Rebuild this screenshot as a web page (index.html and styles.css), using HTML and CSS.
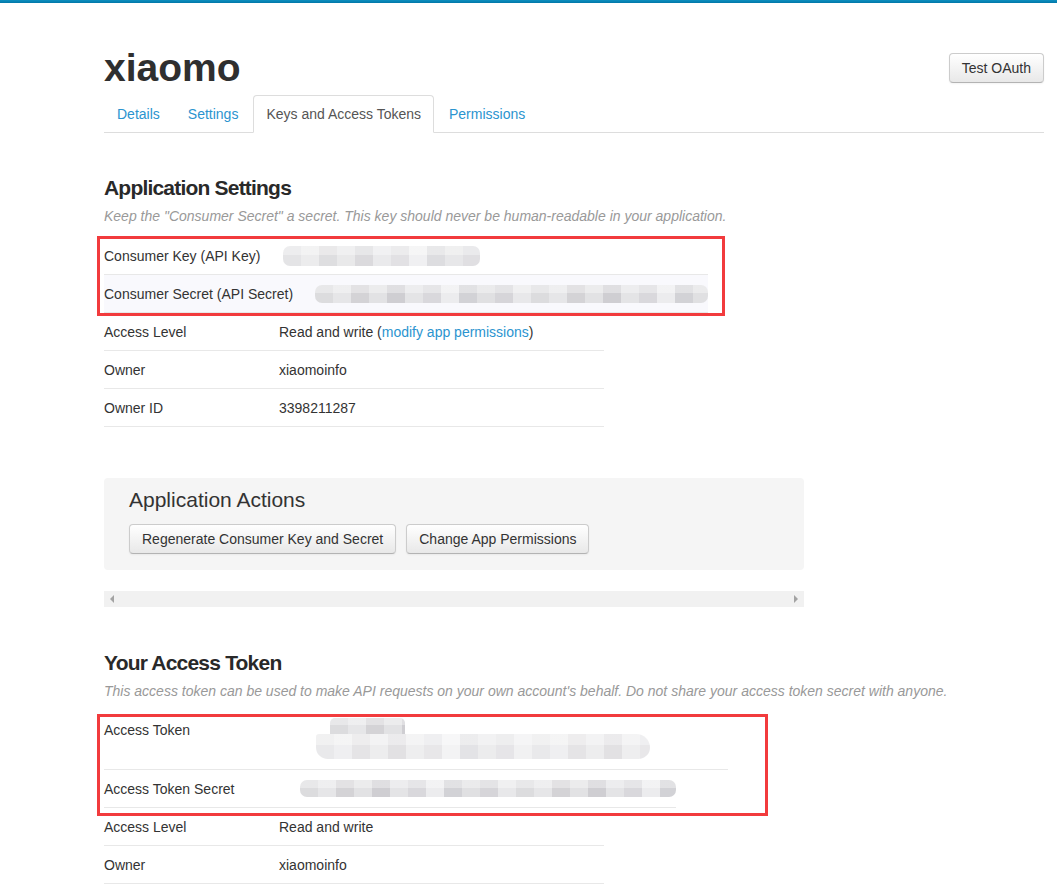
FILE: index.html
```html
<!DOCTYPE html>
<html lang="en">
<head>
  <meta charset="UTF-8">
  <title>xiaomo - Keys and Access Tokens</title>
  <link rel="stylesheet" href="styles.css">
</head>
<body>
  <div class="topbar"></div>

  <div class="container">
    <div class="app-header">
      <h1>xiaomo</h1>
      <button class="btn">Test OAuth</button>
    </div>

    <ul class="nav-tabs">
      <li><a href="#">Details</a></li>
      <li><a href="#">Settings</a></li>
      <li class="active"><a href="#">Keys and Access Tokens</a></li>
      <li><a href="#">Permissions</a></li>
    </ul>

    <!-- Application Settings -->
    <section class="app-section">
      <h2>Application Settings</h2>
      <p class="note">Keep the "Consumer Secret" a secret. This key should never be human-readable in your application.</p>

      <div class="marked marked-keys">
        <div class="row row-wide">
          <span class="label">Consumer Key (API Key)</span>
          <span class="value"><span class="blur blur-key"></span></span>
        </div>
        <div class="row row-wide row-tint">
          <span class="label">Consumer Secret (API Secret)</span>
          <span class="value"><span class="blur blur-secret"></span></span>
        </div>
      </div>
      <div class="row">
        <span class="label">Access Level</span>
        <span class="value">Read and write (<a href="#">modify app permissions</a>)</span>
      </div>
      <div class="row">
        <span class="label">Owner</span>
        <span class="value">xiaomoinfo</span>
      </div>
      <div class="row">
        <span class="label">Owner ID</span>
        <span class="value">3398211287</span>
      </div>
    </section>

    <div class="actions">
      <h3>Application Actions</h3>
      <div class="actions-buttons">
        <button class="btn">Regenerate Consumer Key and Secret</button>
        <button class="btn">Change App Permissions</button>
      </div>
    </div>

    <div class="scrollbar">
      <span class="arrow arrow-left"></span>
      <span class="arrow arrow-right"></span>
    </div>

    <!-- Access Token -->
    <section class="app-section token-section">
      <h2>Your Access Token</h2>
      <p class="note">This access token can be used to make API requests on your own account's behalf. Do not share your access token secret with anyone.</p>

      <div class="marked marked-token">
        <div class="row row-token">
          <span class="label">Access Token</span>
          <span class="value">
            <span class="blur blur-token-a"></span>
            <span class="blur blur-token-b"></span>
          </span>
        </div>
        <div class="row row-token-secret">
          <span class="label">Access Token Secret</span>
          <span class="value"><span class="blur blur-token-secret"></span></span>
        </div>
      </div>
      <div class="row">
        <span class="label">Access Level</span>
        <span class="value">Read and write</span>
      </div>
      <div class="row">
        <span class="label">Owner</span>
        <span class="value">xiaomoinfo</span>
      </div>
    </section>
  </div>
</body>
</html>
```

FILE: styles.css
```css
/* General */
body {
  margin: 0;
  font-family: "Liberation Sans", Arial, sans-serif;
  font-size: 14px;
  line-height: 20px;
  color: #333;
  background-color: #fff;
}

a {
  color: #2b94cf;
  text-decoration: none;
}

.topbar {
  height: 3px;
  background: linear-gradient(#0d8fc0, #0077a8);
}

.container {
  width: 940px;
  margin-left: 104px;
}

/* Header */
.app-header {
  height: 55px;
  padding-top: 37px;
  display: flex;
  justify-content: space-between;
  align-items: center;
}

.app-header h1 {
  margin: 0;
  font-size: 39px;
  line-height: 39px;
  font-weight: bold;
  color: #2f2f2f;
}

.btn {
  font-family: "Liberation Sans", Arial, sans-serif;
  font-size: 14px;
  line-height: 20px;
  color: #333;
  padding: 4px 12px;
  border: 1px solid #ccc;
  border-bottom-color: #b3b3b3;
  border-radius: 4px;
  background: linear-gradient(#ffffff, #e8e8e8);
  box-shadow: inset 0 1px 0 rgba(255,255,255,0.2), 0 1px 2px rgba(0,0,0,0.05);
  cursor: pointer;
}

/* Tabs */
.nav-tabs {
  list-style: none;
  margin: 0;
  padding: 0;
  display: flex;
  border-bottom: 1px solid #ddd;
}

.nav-tabs li {
  margin-bottom: -1px;
}

.nav-tabs a {
  display: block;
  padding: 8px 12px;
  margin-right: 2px;
  line-height: 20px;
  border: 1px solid transparent;
  border-radius: 4px 4px 0 0;
}

.nav-tabs .active a {
  color: #555;
  background-color: #fff;
  border-color: #ddd #ddd transparent;
}

/* Sections */
.app-section h2 {
  margin: 43px 0 0;
  font-size: 21px;
  line-height: 24px;
  font-weight: bold;
  letter-spacing: -0.8px;
  color: #292929;
}

.note {
  margin: 7px 0 11px;
  font-size: 14px;
  line-height: 19px;
  font-style: italic;
  color: #999;
}

.row {
  width: 500px;
  height: 37px;
  display: flex;
  align-items: center;
  border-bottom: 1px solid #e8e8e8;
}

.row .label {
  width: 175px;
  flex-shrink: 0;
  white-space: nowrap;
}

.row-wide {
  width: 604px;
}

.row-tint {
  background-color: #f9f9fd;
}

.row-token {
  width: 624px;
  height: 49px;
  padding-top: 8px;
  align-items: flex-start;
}

.row-token-secret {
  width: 572px;
}

/* Red annotation boxes */
.marked {
  position: relative;
  width: 604px;
}

.marked::after {
  content: "";
  position: absolute;
  border: 3px solid #f23b3d;
}

.marked-keys::after {
  top: -1px;
  bottom: -3px;
  left: -7px;
  right: -17px;
}

.marked-token {
  width: 624px;
}

.marked-token::after {
  top: 2px;
  bottom: -8px;
  left: -7px;
  right: -40px;
}

/* Blurred secrets */
.blur {
  display: block;
  border-radius: 7px;
  filter: blur(0.6px);
  background:
    linear-gradient(rgba(255,255,255,0.35) 0 45%, transparent 45%),
    linear-gradient(90deg,
      #dcdcde 0 18px, #e6e6e8 18px 36px, #d4d3d6 36px 54px, #e2e2e4 54px 72px,
      #cfced2 72px 90px, #e4e4e6 90px 108px, #d9d8dc 108px 126px, #ececee 126px 144px,
      #d2d2d6 144px 162px, #e0e0e2 162px 180px, #d6d5d9 180px 198px, #e8e8ea 198px 216px);
  background-size: 100% 100%, 216px 100%;
}

.value {
  display: block;
}

.blur-key {
  width: 197px;
  height: 20px;
  margin-left: 4px;
  opacity: 0.75;
}

.blur-secret {
  width: 393px;
  height: 18px;
  margin-left: 36px;
}

.blur-token-a {
  width: 75px;
  height: 16px;
  margin: -2px 0 0 51px;
  border-radius: 5px 5px 0 0;
}

.blur-token-b {
  width: 334px;
  height: 25px;
  margin-left: 37px;
  border-radius: 3px 14px 12px 12px;
  opacity: 0.6;
}

.blur-token-secret {
  width: 376px;
  height: 17px;
  margin-left: 21px;
}

/* Application Actions */
.actions {
  width: 650px;
  margin-top: 51px;
  padding: 10px 25px 16px;
  background-color: #f5f5f5;
  border-radius: 4px;
}

.actions h3 {
  margin: 0 0 12px;
  font-size: 21px;
  line-height: 24px;
  font-weight: normal;
  color: #333;
}

.actions-buttons {
  display: flex;
  gap: 10px;
}

/* Horizontal scrollbar */
.scrollbar {
  width: 700px;
  height: 16px;
  margin-top: 21px;
  background-color: #f1f1f1;
  display: flex;
  justify-content: space-between;
  align-items: center;
  padding: 0 6px;
  box-sizing: border-box;
}

.arrow {
  width: 0;
  height: 0;
  border-top: 4px solid transparent;
  border-bottom: 4px solid transparent;
}

.arrow-left {
  border-right: 4px solid #a3a3a3;
}

.arrow-right {
  border-left: 4px solid #a3a3a3;
}

.token-section h2 {
  margin-top: 44px;
}
```
